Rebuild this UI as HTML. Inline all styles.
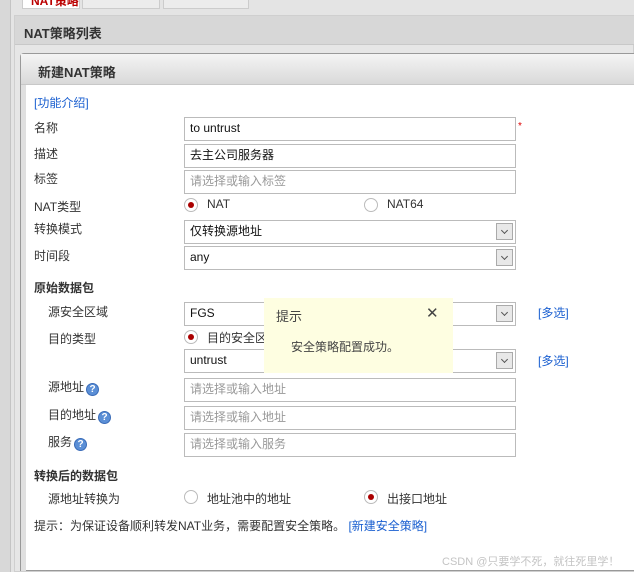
<!DOCTYPE html>
<html><head><meta charset="utf-8"><style>
*{margin:0;padding:0;box-sizing:border-box}
body{width:634px;height:572px;overflow:hidden;background:#e4e4e4;font-family:"Liberation Sans","Noto Sans CJK SC",sans-serif;font-size:12px;color:#333;position:relative}
.a{position:absolute}
.lbl{position:absolute;font-size:12px;color:#333}
.in{position:absolute;left:184px;width:332px;height:24px;border:1px solid #bbb;background:#fff;padding:0 5px;line-height:21px;font-size:12px;color:#111}
.ph{color:#999}
.dd{position:absolute;right:2px;top:2px;width:17px;height:17px;border:1px solid #aaa;background:#e8e8e8}
.dd:after{content:"";position:absolute;left:5px;top:4px;width:4px;height:4px;border-right:1px solid #555;border-bottom:1px solid #555;transform:rotate(45deg)}
.rad{position:absolute;width:14px;height:14px;border:1px solid #bbb;border-radius:50%;background:#fff}
.rad.on:after{content:"";position:absolute;left:3px;top:3px;width:6px;height:6px;border-radius:50%;background:#a00}
.q{display:inline-block;width:13px;height:13px;border-radius:50%;background:#5b8fd6;border:1px solid #3a6cb8;color:#fff;font-size:10px;font-weight:bold;text-align:center;line-height:12px;vertical-align:-1px;margin-left:2px}
.lnk{position:absolute;color:#1a5fd0}
.b{font-weight:bold;color:#333}
</style></head><body>
<div class="a" style="left:0;top:0;width:11px;height:572px;background:#d8d8d8;border-right:1px solid #c4c4c4"></div>
<div class="a" style="left:22px;top:0;width:58px;height:9px;background:#fff;border:1px solid #ccc;border-top:none;overflow:hidden"><div style="color:#b00;font-weight:bold;margin-top:-8px;margin-left:8px">NAT策略</div></div>
<div class="a" style="left:82px;top:0;width:78px;height:9px;background:#ececec;border:1px solid #ccc;border-top:none"></div>
<div class="a" style="left:163px;top:0;width:86px;height:9px;background:#ececec;border:1px solid #ccc;border-top:none"></div>
<div class="a" style="left:14px;top:15px;width:620px;height:557px;background:#e6e6e6;border:1px solid #cfcfcf"></div>
<div class="a" style="left:15px;top:16px;width:619px;height:29px;background:#d7d7d7;border-bottom:1px solid #c8c8c8"></div>
<div class="a b" style="left:24px;top:23px;font-size:13px">NAT策略列表</div>
<div class="a" style="left:20px;top:53px;width:614px;height:518px;background:#fff;border:1px solid #999;border-radius:4px 0 0 0;border-right:none"></div>
<div class="a" style="left:21px;top:54px;width:613px;height:31px;background:linear-gradient(#f4f4f4,#d9d9d9);border-bottom:1px solid #c8c8c8"></div>
<div class="a" style="left:21px;top:85px;width:5px;height:486px;background:#e0e0e0"></div>
<div class="a b" style="left:38px;top:62px;font-size:13px">新建NAT策略</div>
<div class="lnk" style="left:34px;top:94px">[功能介绍]</div>

<div class="lbl" style="left:34px;top:119px">名称</div>
<div class="in" style="top:117px">to untrust</div>
<div class="a" style="left:518px;top:121px;color:#d00;font-size:10px">*</div>
<div class="lbl" style="left:34px;top:145px">描述</div>
<div class="in" style="top:144px">去主公司服务器</div>
<div class="lbl" style="left:34px;top:170px">标签</div>
<div class="in ph" style="top:170px">请选择或输入标签</div>
<div class="lbl" style="left:34px;top:198px">NAT类型</div>
<div class="rad on" style="left:184px;top:198px"></div>
<div class="lbl" style="left:207px;top:197px">NAT</div>
<div class="rad" style="left:364px;top:198px"></div>
<div class="lbl" style="left:387px;top:197px">NAT64</div>
<div class="lbl" style="left:34px;top:220px">转换模式</div>
<div class="in" style="top:220px">仅转换源地址<div class="dd"></div></div>
<div class="lbl" style="left:34px;top:247px">时间段</div>
<div class="in" style="top:246px">any<div class="dd"></div></div>
<div class="lbl b" style="left:34px;top:279px">原始数据包</div>
<div class="lbl" style="left:48px;top:303px">源安全区域</div>
<div class="in" style="top:302px">FGS<div class="dd"></div></div>
<div class="lnk" style="left:538px;top:304px">[多选]</div>
<div class="lbl" style="left:48px;top:330px">目的类型</div>
<div class="rad on" style="left:184px;top:330px"></div>
<div class="lbl" style="left:207px;top:329px">目的安全区域</div>
<div class="in" style="top:349px">untrust<div class="dd"></div></div>
<div class="lnk" style="left:538px;top:352px">[多选]</div>
<div class="lbl" style="left:48px;top:378px">源地址<span class="q">?</span></div>
<div class="in ph" style="top:378px">请选择或输入地址</div>
<div class="lbl" style="left:48px;top:406px">目的地址<span class="q">?</span></div>
<div class="in ph" style="top:406px">请选择或输入地址</div>
<div class="lbl" style="left:48px;top:433px">服务<span class="q">?</span></div>
<div class="in ph" style="top:433px">请选择或输入服务</div>
<div class="lbl b" style="left:34px;top:467px">转换后的数据包</div>
<div class="lbl" style="left:48px;top:490px">源地址转换为</div>
<div class="rad" style="left:184px;top:490px"></div>
<div class="lbl" style="left:207px;top:490px">地址池中的地址</div>
<div class="rad on" style="left:364px;top:490px"></div>
<div class="lbl" style="left:387px;top:490px">出接口地址</div>
<div class="lbl" style="left:34px;top:517px">提示：为保证设备顺利转发NAT业务，需要配置安全策略。 <span style="color:#1a5fd0">[新建安全策略]</span></div>
<div class="a" style="left:442px;top:553px;color:#c4c4c4;font-size:11px">CSDN @只要学不死，就往死里学！</div>

<div class="a" style="left:264px;top:298px;width:189px;height:75px;background:#fefee1"></div>
<div class="a" style="left:276px;top:306px;font-size:13px;color:#444">提示</div>
<div class="a" style="left:426px;top:304px;font-size:15px;color:#444">✕</div>
<div class="a" style="left:291px;top:338px;font-size:12px;color:#444">安全策略配置成功。</div>
</body></html>
